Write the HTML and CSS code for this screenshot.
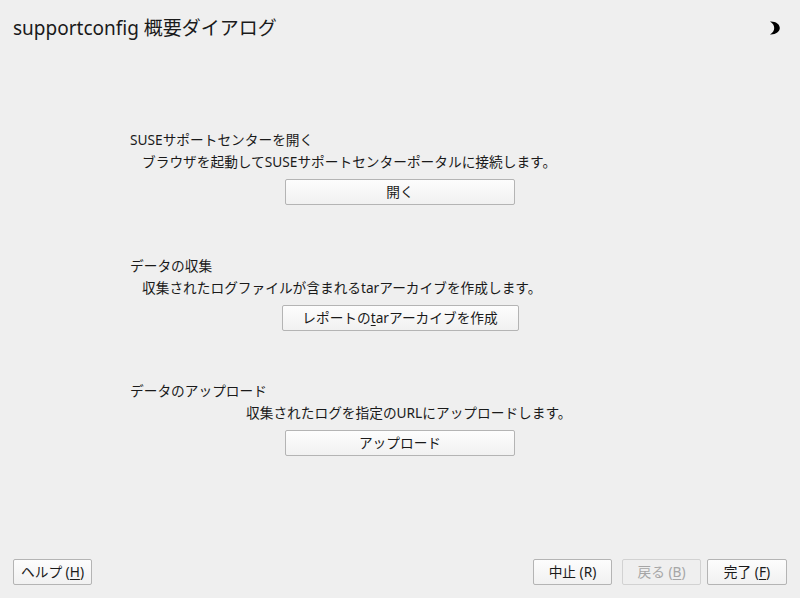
FILE: index.html
```html
<!DOCTYPE html>
<html lang="ja">
<head>
<meta charset="utf-8">
<title>supportconfig 概要ダイアログ</title>
<link rel="stylesheet" href="styles.css">
</head>
<body>
<div class="window">
  <header class="titlebar">
    <h1 class="title">supportconfig 概要ダイアログ</h1>
    <svg class="moon" width="12" height="14" viewBox="0 0 12 14">
      <path d="M1 0.6 C6.5 0.2 10.8 3.2 10.8 7 C10.8 10.8 6.5 13.8 1 13.4 C4 11.6 5.2 9.4 5.2 7 C5.2 4.6 4 2.4 1 0.6 Z" fill="#000"/>
    </svg>
  </header>
  <main class="content">
    <section class="group g1">
      <div class="heading">SUSEサポートセンターを開く</div>
      <div class="desc desc-a">ブラウザを起動してSUSEサポートセンターポータルに接続します。</div>
      <div class="btnrow"><button class="btn wide">開く</button></div>
    </section>
    <section class="group g2">
      <div class="heading">データの収集</div>
      <div class="desc desc-a">収集されたログファイルが含まれるtarアーカイブを作成します。</div>
      <div class="btnrow"><button class="btn wider">レポートの<u>t</u>arアーカイブを作成</button></div>
    </section>
    <section class="group">
      <div class="heading">データのアップロード</div>
      <div class="desc desc-b">収集されたログを指定のURLにアップロードします。</div>
      <div class="btnrow"><button class="btn wide">アップロード</button></div>
    </section>
  </main>
  <footer class="footer">
    <button class="btn small">ヘルプ (<u>H</u>)</button>
    <div class="right">
      <button class="btn small">中止 (R)</button>
      <button class="btn small disabled">戻る (<u>B</u>)</button>
      <button class="btn small last">完了 (<u>F</u>)</button>
    </div>
  </footer>
</div>
</body>
</html>
```
FILE: styles.css
```css
html, body {
  margin: 0;
  padding: 0;
}
body {
  background: #efefef;
  color: #1a1a1a;
  font-family: "Noto Sans", "Noto Sans CJK JP", sans-serif;
  font-size: 13.7px;
}
.window {
  width: 800px;
  height: 598px;
  display: flex;
  flex-direction: column;
  box-sizing: border-box;
}
.titlebar {
  display: flex;
  align-items: center;
  justify-content: space-between;
  padding: 14px 18px 0 13px;
  height: 28px;
}
.title {
  margin: 0;
  font-size: 19px;
  font-weight: normal;
  line-height: 28px;
}
.moon {
  display: block;
  margin-right: 1px;
}
.content {
  flex: 1;
  padding-top: 88px;
}
.group {
  display: flex;
  flex-direction: column;
  height: 125px;
}
.g1 { height: 126px; }
.heading {
  line-height: 20px;
  margin-left: 130px;
}
.desc {
  line-height: 20px;
  margin-top: 2px;
}
.desc-a { margin-left: 142px; }
.desc-b { margin-left: 246px; }
.btnrow {
  display: flex;
  justify-content: center;
  margin-top: 7px;
}
.btn {
  font: inherit;
  color: #1a1a1a;
  height: 26px;
  border: 1px solid #b4b4b4;
  border-radius: 2px;
  background: linear-gradient(#fdfdfd, #f1f1f1);
  padding: 0 10px;
  line-height: 22px;
  box-sizing: border-box;
}
.btn u {
  text-underline-offset: 2px;
}
.wide { width: 230px; }
.wider { width: 237px; }
.small { width: 79px; padding: 0; }
.disabled {
  color: #a6a6a6;
  border-color: #d2d2d2;
  background: #efefef;
}
.footer {
  display: flex;
  justify-content: space-between;
  padding: 0 13px 13px 13px;
}
.right {
  display: flex;
  gap: 10px;
}
.right .last { margin-left: -4px; width: 80px; }
```
